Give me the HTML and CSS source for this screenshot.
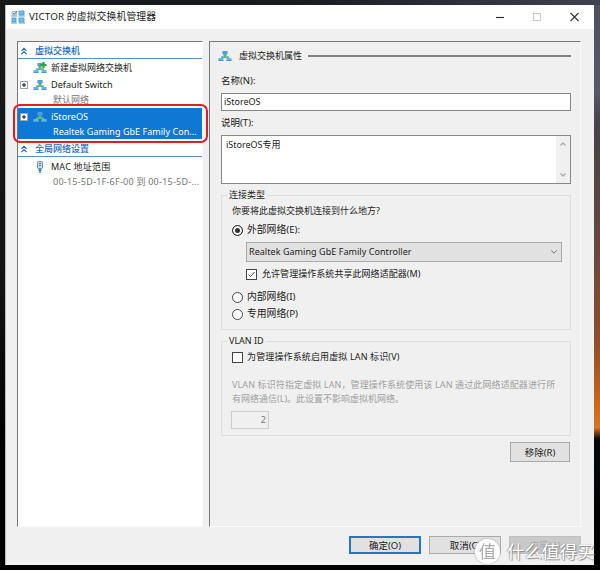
FILE: index.html
```html
<!DOCTYPE html>
<html lang="zh-CN">
<head>
<meta charset="utf-8">
<title>VICTOR 的虚拟交换机管理器</title>
<link rel="stylesheet" href="styles.css">
</head>
<body>
<svg width="0" height="0" class="defs" aria-hidden="true">
  <symbol id="switch" viewBox="0 0 14 12">
    <path d="M7 4v3M4 9V7.200h6V9" fill="none" stroke="#5db88a" stroke-width="1.800"/>
    <rect x="4.500" y="1" width="5" height="3.500" fill="#4d9ee0"/>
    <path d="M5.500 4.500h3v1.500h-3z" fill="#55b184"/>
    <rect x="0.500" y="8" width="5" height="3" fill="#65b5e6"/>
    <rect x="8.500" y="8" width="5" height="3" fill="#65b5e6"/>
    <path d="M.5 10.500h5M8.500 10.500h5" stroke="#4c9bd3"/>
  </symbol>
  <symbol id="chevrons" viewBox="0 0 8 8"><path d="M1.500 3.800L4 1.300l2.500 2.500M1.500 7.200L4 4.700l2.500 2.500" fill="none" stroke="#1767c8" stroke-width="1.200"/></symbol>
  <symbol id="plusbox" viewBox="0 0 8 8"><rect x=".5" y=".5" width="7" height="7" fill="#fff" stroke="#9aa6b2"/><path d="M2 4h4M4 2v4" stroke="#111"/></symbol>
</svg>
<main class="desktop">
<section class="window">
  <header class="titlebar">
    <svg class="app-icon" viewBox="0 0 14 14"><g fill="#78bfe7" stroke="#3e94ca" stroke-width=".8"><path d="M8 1h5v4H8zM1 8h4v4H1zM8 8h5v4H8z"/></g><path d="M1 1.500h4.500V5H1z" fill="#e4eff5" stroke="#8ba5b2" stroke-width=".7"/><path d="M2 3l1.300 1.300L6 1" fill="none" stroke="#477080"/><path d="M0 13h6M7.500 13H14M7.500 6H14M0 6h6" stroke="#51aadd"/></svg>
    <h1>VICTOR 的虚拟交换机管理器</h1>
    <svg class="caption" viewBox="0 0 90 14"><path d="M2 7.500h8" stroke="#333" stroke-width="1.200"/><rect x="39.500" y="3.500" width="7" height="7" fill="none" stroke="#ccc"/><path d="M76.500 3l8 8M84.500 3l-8 8" stroke="#333" stroke-width="1.100"/></svg>
  </header>
  <div class="panes">
    <nav class="tree">
      <div class="tree-head"><svg><use href="#chevrons"/></svg><span>虚拟交换机</span></div>
      <div class="row"><i></i><svg class="net" viewBox="0 0 14 12"><use href="#switch"/><path d="M10.500 0v6M7.500 3h6" stroke="#29a62c" stroke-width="2.200"/></svg><span>新建虚拟网络交换机</span></div>
      <div class="row"><svg class="plus"><use href="#plusbox"/></svg><svg class="net"><use href="#switch"/></svg><span class="latin">Default Switch</span></div>
      <div class="sub first-sub">默认网络</div>
      <div class="selected">
        <div class="row"><svg class="plus"><use href="#plusbox"/></svg><svg class="net"><use href="#switch"/></svg><span class="latin">iStoreOS</span></div>
        <div class="sub">Realtek Gaming GbE Family Con...</div>
      </div>
      <div class="tree-head second"><svg><use href="#chevrons"/></svg><span>全局网络设置</span></div>
      <div class="row mac"><i></i><svg class="net" viewBox="0 0 14 12"><rect x="4.500" y=".5" width="5" height="7" rx="1" fill="#c4dded" stroke="#68899f"/><path d="M6 2.500h2M6 4.500h2" stroke="#547891"/><path d="M7 8v4M5.500 9h3" stroke="#367fb2" stroke-width="1.500"/></svg><span class="mac-name">MAC 地址范围</span></div>
      <div class="sub mac-range">00-15-5D-1F-6F-00 到 00-15-5D-...</div>
    </nav>
    <section class="details">
      <div class="section-head"><svg class="net"><use href="#switch"/></svg><h2>虚拟交换机属性</h2><hr></div>
      <div class="label name-label">名称(N):</div>
      <div class="field"><span>iStoreOS</span></div>
      <div class="label desc-label">说明(T):</div>
      <div class="area"><span>iStoreOS专用</span><div class="scroll"><svg viewBox="0 0 10 6"><path d="M2.500 4.500L5 2l2.500 2.500"/></svg><svg viewBox="0 0 10 6"><path d="M2.500 1.500L5 4l2.500-2.500"/></svg></div></div>
      <fieldset class="connection">
        <legend>连接类型</legend>
        <p class="question">你要将此虚拟交换机连接到什么地方?</p>
        <div class="choice external"><b class="radio checked"></b><span>外部网络(E):</span></div>
        <div class="select"><span>Realtek Gaming GbE Family Controller</span><svg viewBox="0 0 10 6"><path d="M1.500 1L5 4.500 8.500 1"/></svg></div>
        <div class="choice share"><svg class="check" viewBox="0 0 11 11"><rect x=".5" y=".5" width="10" height="10"/><path d="M2.500 5.500l2 2 4-4.500"/></svg><span>允许管理操作系统共享此网络适配器(M)</span></div>
        <div class="choice internal"><b class="radio"></b><span>内部网络(I)</span></div>
        <div class="choice private"><b class="radio"></b><span>专用网络(P)</span></div>
      </fieldset>
      <fieldset class="vlan">
        <legend>VLAN ID</legend>
        <div class="choice vlan-enable"><svg class="check" viewBox="0 0 11 11"><rect x=".5" y=".5" width="10" height="10"/></svg><span>为管理操作系统启用虚拟 LAN 标识(V)</span></div>
        <p class="hint"><span class="hint-one">VLAN 标识符指定虚拟 LAN，管理操作系统使用该 LAN 通过此网络适配器进行所</span><br>有网络通信(L)。此设置不影响虚拟机网络。</p>
        <div class="number">2</div>
      </fieldset>
      <button class="remove">移除(R)</button>
    </section>
  </div>
  <footer><button class="primary">确定(O)</button><button>取消(C)</button><button class="disabled">应用(A)</button></footer>
</section>
<div class="selection-ring"></div>
<div class="watermark"><span class="seal">值</span><span class="brand">什么值得买</span></div>
</main>
</body>
</html>
```

FILE: styles.css
```css
* { box-sizing: border-box; }
body { margin: 0; font: 9px/14px "Noto Sans", "Noto Sans CJK SC", sans-serif; color: #222; }
h1, h2, p { margin: 0; font: inherit; }
span, h1, h2, legend { white-space: nowrap; }
svg { display: block; flex: none; }
.defs { position: absolute; }
.desktop { position: relative; width: 600px; height: 570px; overflow: hidden; padding: 5px 6px 5px 5px; background: linear-gradient(90deg, #17191b, #191b1f 50%, #414251) top / 100% 5px no-repeat, linear-gradient(#4f4e60, #59576b 16%, #454248 22%, #66483e 43%, #8f4d2c 60%, #d16b18 72%, #d87523 75%, #08090b 77%, #000) right / 7px 100% no-repeat, linear-gradient(#17191a, #111315 50%, #000 80%); }
.window { width: 589px; height: 560px; background: #f0f0f0; border-left: 1px solid #bbb; }
.titlebar { display: flex; align-items: center; height: 24px; background: #fff; padding: 0 10px 0 5px; }
.app-icon { width: 14px; height: 14px; margin-right: 4px; }
.titlebar h1 { font-size: 9.800px; letter-spacing: .13px; }
.caption { width: 90px; height: 14px; margin-left: auto; }
.panes { display: flex; gap: 6px; padding: 12px 0 0 11px; }
.tree { width: 186px; height: 486px; background: #fff; border: 1px solid #777; border-right-color: #fafafa; border-bottom-color: #fafafa; }
.tree-head { display: flex; align-items: center; height: 17px; border-bottom: 1px solid #4f93cf; color: #1767c8; font-weight: 500; padding-top: 1px; }
.tree-head svg { width: 8px; height: 8px; margin: 0 7px 0 2px; }
.row { display: flex; align-items: center; height: 17px; padding-left: 2px; }
.row i { width: 8px; }
.row .plus { width: 8px; height: 8px; }
.net { width: 14px; height: 12px; }
.row .net { margin: 0 4px 0 5px; }
.latin { font-size: 9.150px; }
.sub { height: 14px; padding-left: 35px; color: #777; white-space: nowrap; line-height: 11px; letter-spacing: .04px; }
.first-sub { height: 15px; line-height: 13px; }
.selected { height: 31px; background: #0f78d4; color: #fff; }
.selected .sub { color: #fff; line-height: 13px; }
.second { height: 18px; padding-top: 2px; }
.mac { height: 19px; }
.mac-name { letter-spacing: .2px; }
.mac-range { line-height: 12px; letter-spacing: .24px; }
.selection-ring { position: absolute; left: 13px; top: 104px; width: 195px; height: 39px; border: 2px solid #df1e24; border-radius: 7px; }
.details { width: 372px; height: 486px; border: 1px solid #777; border-right-color: #fafafa; border-bottom-color: #fafafa; padding: 6px 9px 0 11px; }
.section-head { display: flex; align-items: center; height: 16px; margin-left: -3px; }
.section-head h2 { margin: 0 6px 0 7px; }
.section-head hr { flex: 1; border: 0; height: 2px; background: #808080; margin: 0; }
.label { height: 14px; font-size: 9.500px; }
.name-label { margin-top: 10px; }
.field { height: 18px; margin-top: 5px; border: 1px solid #888; background: #fff; padding: 1px 2px; }
.desc-label { margin-top: 5px; }
.area { display: flex; justify-content: space-between; height: 49px; margin-top: 5px; border: 1px solid #888; background: #fff; padding-left: 4px; line-height: 17px; }
.scroll { width: 14px; height: 47px; background: #f0f0f0; padding: 5px 2px; display: flex; flex-direction: column; justify-content: space-between; }
.scroll svg { width: 10px; height: 6px; fill: none; stroke: #aaa; stroke-width: 1.300; }
fieldset { position: relative; border: 1px solid #dedede; padding: 8px 8px 0 10px; min-width: 0; margin: 0; }
legend { position: absolute; top: -8px; left: 5px; background: #f0f0f0; padding: 0 2px; }
.connection { height: 135px; margin-top: 11px; }
.question { height: 14px; }
.choice { display: flex; align-items: center; height: 14px; }
.radio { width: 11px; height: 11px; border: 1px solid #444; border-radius: 50%; background: #fff; margin-right: 4px; }
.checked { background: #333; border: 1px solid #333; box-shadow: inset 0 0 0 2px #fff; }
.external, .internal, .private { font-size: 9.800px; }
.external { margin-top: 5px; }
.select { display: flex; align-items: center; justify-content: space-between; height: 20px; margin: 5px 0 0 14px; border: 1px solid #aaa; background: #e1e1e1; padding: 0 3px 0 2px; letter-spacing: .05px; }
.select svg { width: 8px; height: 6px; fill: none; stroke: #555; }
.check { width: 11px; height: 11px; fill: #fff; stroke: #444; }
.check path { fill: none; }
.share { margin: 5px 0 0 14px; }
.share span { margin-left: 5px; letter-spacing: .05px; }
.internal { margin-top: 9px; }
.private { margin-top: 3px; }
.vlan { height: 95px; margin-top: 11px; }
.vlan-enable span { margin-left: 4px; letter-spacing: .13px; }
.hint { margin-top: 14px; color: #a0a0a0; }
.hint-one { letter-spacing: .11px; }
.number { width: 38px; height: 18px; margin: 5px 0 0 -1px; border: 1px solid #ccc; color: #777; text-align: right; padding: 1px 2px; }
button { display: block; width: 72px; height: 18px; padding: 0; border: 1px solid #aaa; background: #e1e1e1; color: #222; font: 9.500px/15px "Noto Sans", "Noto Sans CJK SC", sans-serif; }
.remove { width: 60px; height: 20px; margin: 6px 1px 0 auto; }
footer { display: flex; gap: 8px; margin: 9px 0 0 343px; }
.primary { border: 2px solid #2476c8; line-height: 13px; }
.disabled { color: #aaa; background: #c9c9c9; border-color: #bfbfbf; }
.watermark { position: absolute; left: 475px; top: 539px; display: flex; align-items: center; gap: 7px; color: #fff; font-size: 17px; line-height: 25px; }
.seal { width: 25px; height: 25px; border-radius: 50%; background: #fff; color: #aaa; text-align: center; filter: drop-shadow(0 0 1px #aaa); }
.brand { font-size: 17.500px; text-shadow: 1px 1px 1px #888, -1px 0 1px #aaa; }
```
